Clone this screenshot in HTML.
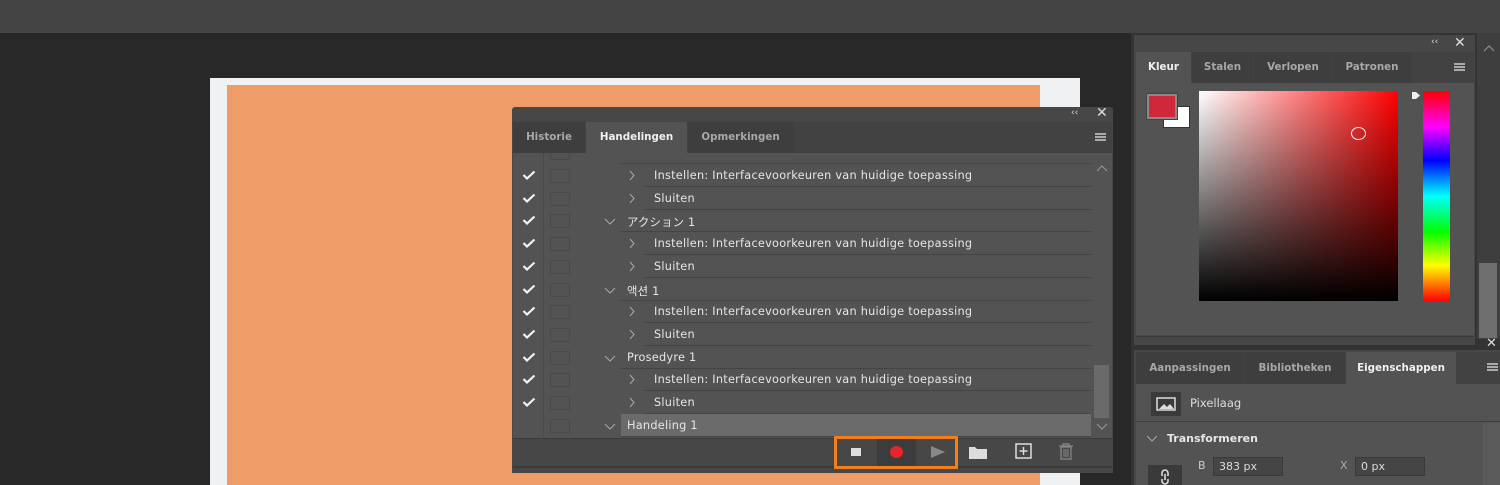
<!DOCTYPE html><html><head><style>
*{margin:0;padding:0;box-sizing:border-box}
body{width:1500px;height:485px;overflow:hidden;background:#282828;font-family:"DejaVu Sans","Noto Sans CJK JP","NanumGothic",sans-serif;position:relative}
.a{position:absolute}
.t{color:#e6e6e6;font-size:11.3px;white-space:nowrap}
.row .t{letter-spacing:0.25px}
.tab{position:absolute;font-size:10.3px;font-weight:bold;color:#a8a8a8;text-align:center}
.row{position:absolute;left:513px;width:578px;height:23px}
.ck{position:absolute;left:9px;top:6px;width:14px;height:10px}
.bx{position:absolute;left:37px;top:5px;width:20px;height:14px;border:1px solid #4a4a4a}
.ln{position:absolute;bottom:0;height:1px;background:#444;right:0}
</style></head><body>
<div class="a" style="left:0;top:0;width:1500px;height:33px;background:#444"></div>
<div class="a" style="left:210px;top:78px;width:870px;height:407px;background:#f0f1f3"></div>
<div class="a" style="left:227px;top:85px;width:813px;height:400px;background:#ef9c68"></div>

<div class="a" style="left:512px;top:107px;width:601px;height:366px;background:#474747;border-radius:3px 3px 0 0"></div>
<div class="a t" style="left:1071px;top:108px;font-size:9px;color:#ddd">‹‹</div>
<div class="a t" style="left:1096px;top:105px;font-size:14px;font-weight:bold;color:#ddd">✕</div>
<div class="a" style="left:513px;top:122px;width:599px;height:31px;background:#424242"></div>
<div class="tab" style="left:513px;top:122px;width:72px;height:31px;line-height:31px;background:#3e3e3e">Historie</div>
<div class="tab" style="left:586px;top:122px;width:101px;height:31px;line-height:31px;background:#535353;color:#f0f0f0">Handelingen</div>
<div class="tab" style="left:688px;top:122px;width:105px;height:31px;line-height:31px;background:#3e3e3e">Opmerkingen</div>
<div class="a" style="left:1095px;top:133px;width:11px;height:8px;border-top:2px solid #aaa;border-bottom:2px solid #aaa"><div style="margin-top:1px;height:2px;background:#aaa"></div></div>
<div class="a" style="left:513px;top:153px;width:599px;height:285px;background:#535353"></div>
<div class="a" style="left:543px;top:153px;width:1px;height:285px;background:#4a4a4a"></div>
<div class="a" style="left:550px;top:153px;width:20px;height:7px;border:1px solid #4a4a4a;border-top:none"></div>
<div class="a" style="left:621px;top:163px;width:470px;height:1px;background:#444"></div>
<div id="rows"></div>
<svg class="a" style="left:1096px;top:165px" width="12" height="7"><path d="M1 6l5-5 5 5" fill="none" stroke="#999"/></svg>
<div class="a" style="left:1094px;top:365px;width:15px;height:53px;background:#6a6a6a"></div>
<svg class="a" style="left:1096px;top:423px" width="12" height="7"><path d="M1 1l5 5 5-5" fill="none" stroke="#999"/></svg>
<div class="a" style="left:513px;top:438px;width:599px;height:1px;background:#3a3a3a"></div>
<div class="a" style="left:513px;top:466px;width:599px;height:2px;background:#3a3a3a"></div>
<div class="a" style="left:834px;top:436px;width:124px;height:33px;border:3px solid #f07f1c"></div>
<div class="a" style="left:877px;top:439px;width:39px;height:27px;background:#3c3c3c"></div>
<div class="a" style="left:851px;top:448px;width:10px;height:8px;background:#ddd"></div>
<div class="a" style="left:890px;top:446px;width:13px;height:12px;border-radius:50%;background:#e8252b"></div>
<svg class="a" style="left:930px;top:446px" width="16" height="12"><path d="M1 0L15 6L1 12Z" fill="#888"/></svg>
<svg class="a" style="left:968px;top:444px" width="20" height="16"><path d="M1 3h6l2 2h10v10H1Z" fill="#ddd"/></svg>
<svg class="a" style="left:1015px;top:443px" width="17" height="16"><rect x="1" y="1" width="15" height="14" fill="none" stroke="#ddd" stroke-width="1.5"/><path d="M8.5 4v8M4.5 8h8" stroke="#ddd" stroke-width="1.5"/></svg>
<svg class="a" style="left:1058px;top:443px" width="16" height="17"><path d="M1 3h14M5 3V1h6v2M3 4h10v12H3Z" fill="none" stroke="#888" stroke-width="1.3"/><path d="M6 6v8M8 6v8M10 6v8" stroke="#888"/></svg>

<div class="a" style="left:1131px;top:33px;width:369px;height:452px;background:#333"></div>
<div class="a" style="left:1477px;top:33px;width:23px;height:306px;background:#3e3e3e"></div>
<svg class="a" style="left:1483px;top:45px" width="12" height="7"><path d="M1 6l5-5 5 5" fill="none" stroke="#999"/></svg>
<div class="a" style="left:1479px;top:263px;width:18px;height:75px;background:#6e6e6e"></div>
<div class="a t" style="left:1486px;top:336px;font-size:13px;font-weight:bold;color:#ddd">✕</div>
<div class="a" style="left:1134px;top:35px;width:341px;height:310px;background:#474747"></div>
<div class="a t" style="left:1431px;top:37px;font-size:9px;color:#ddd">‹‹</div>
<div class="a t" style="left:1454px;top:35px;font-size:14px;font-weight:bold;color:#ddd">✕</div>
<div class="a" style="left:1136px;top:52px;width:338px;height:31px;background:#424242"></div>
<div class="tab" style="left:1136px;top:52px;width:55px;height:31px;line-height:31px;background:#535353;color:#f0f0f0">Kleur</div>
<div class="tab" style="left:1192px;top:52px;width:61px;height:31px;line-height:31px;background:#3e3e3e">Stalen</div>
<div class="tab" style="left:1254px;top:52px;width:78px;height:31px;line-height:31px;background:#3e3e3e">Verlopen</div>
<div class="tab" style="left:1333px;top:52px;width:78px;height:31px;line-height:31px;background:#3e3e3e">Patronen</div>
<div class="a" style="left:1454px;top:63px;width:11px;height:8px;border-top:2px solid #aaa;border-bottom:2px solid #aaa"><div style="margin-top:1px;height:2px;background:#aaa"></div></div>
<div class="a" style="left:1136px;top:83px;width:338px;height:252px;background:#535353"></div>
<div class="a" style="left:1163px;top:106px;width:27px;height:22px;background:#fff;border:1px solid #333"></div>
<div class="a" style="left:1147px;top:94px;width:30px;height:25px;background:#d0283a;border:2px solid #8a8a8a;outline:1px solid #444"></div>
<div class="a" style="left:1199px;top:91px;width:199px;height:210px;background:linear-gradient(to bottom,rgba(0,0,0,0),#000),linear-gradient(to right,#fff,#f00)"></div>
<div class="a" style="left:1351px;top:127px;width:15px;height:13px;border:1px solid #eee;border-radius:50%"></div>
<div class="a" style="left:1423px;top:91px;width:27px;height:210px;background:linear-gradient(to bottom,#f00,#f0f 17%,#00f 33%,#0ff 50%,#0f0 67%,#ff0 83%,#f00)"></div>
<svg class="a" style="left:1411px;top:91px" width="10" height="9"><path d="M1 1h4l4 3.5-4 3.5H1Z" fill="#eee"/></svg>
<div class="a" style="left:1136px;top:336px;width:338px;height:8px;background:#474747;border-top:1px solid #3a3a3a"></div>
<div class="a" style="left:1134px;top:350px;width:366px;height:135px;background:#474747"></div>
<div class="a" style="left:1136px;top:352px;width:364px;height:32px;background:#424242"></div>
<div class="tab" style="left:1136px;top:352px;width:108px;height:32px;line-height:32px;background:#3e3e3e">Aanpassingen</div>
<div class="tab" style="left:1245px;top:352px;width:100px;height:32px;line-height:32px;background:#3e3e3e">Bibliotheken</div>
<div class="tab" style="left:1346px;top:352px;width:110px;height:32px;line-height:32px;background:#535353;color:#f0f0f0">Eigenschappen</div>
<div class="a" style="left:1487px;top:363px;width:11px;height:8px;border-top:2px solid #aaa;border-bottom:2px solid #aaa"><div style="margin-top:1px;height:2px;background:#aaa"></div></div>
<div class="a" style="left:1136px;top:384px;width:364px;height:101px;background:#535353"></div>
<div class="a" style="left:1151px;top:392px;width:30px;height:24px;background:#3a3a3a"></div>
<svg class="a" style="left:1156px;top:397px" width="20" height="14"><rect x="1" y="1" width="18" height="12" fill="none" stroke="#ddd" stroke-width="1.5"/><path d="M3 12l5-5 3 3 3-3 4 5Z" fill="#ddd"/></svg>
<div class="a t" style="left:1190px;top:396px;font-size:11.5px;color:#ddd">Pixellaag</div>
<div class="a" style="left:1136px;top:421px;width:364px;height:1px;background:#3f3f3f"></div>
<div class="a" style="left:1483px;top:423px;width:17px;height:62px;background:#5a5a5a"></div>
<svg class="a" style="left:1146px;top:435px" width="12" height="7"><path d="M1 1l5 5 5-5" fill="none" stroke="#aaa"/></svg>
<div class="a t" style="left:1167px;top:432px;font-weight:bold;font-size:11px;color:#e6e6e6">Transformeren</div>
<div class="a t" style="left:1198px;top:459px;color:#ccc;font-size:11px">B</div>
<div class="a" style="left:1213px;top:457px;width:70px;height:19px;background:#454545;border:1px solid #3a3a3a"></div>
<div class="a t" style="left:1219px;top:460px;font-size:11px;color:#ddd">383 px</div>
<div class="a t" style="left:1340px;top:459px;color:#aaa;font-size:11px">X</div>
<div class="a" style="left:1355px;top:457px;width:70px;height:19px;background:#454545;border:1px solid #3a3a3a"></div>
<div class="a t" style="left:1361px;top:460px;font-size:11px;color:#ddd">0 px</div>
<div class="a" style="left:1148px;top:465px;width:34px;height:20px;background:#3a3a3a"></div>
<svg class="a" style="left:1159px;top:469px" width="12" height="16"><path d="M3 7V4a3 3 0 0 1 6 0v3M3 10v2a3 3 0 0 0 6 0v-2M6 5v6" fill="none" stroke="#ddd" stroke-width="1.6"/></svg>

<script>
var rows=[["s","Instellen:  Interfacevoorkeuren van huidige toepassing",1],["s","Sluiten",1],["g","アクション 1",1],["s","Instellen:  Interfacevoorkeuren van huidige toepassing",1],["s","Sluiten",1],["g","액션 1",1],["s","Instellen:  Interfacevoorkeuren van huidige toepassing",1],["s","Sluiten",1],["g","Prosedyre 1",1],["s","Instellen:  Interfacevoorkeuren van huidige toepassing",1],["s","Sluiten",1],["h","Handeling 1",0]];
var h="";rows.forEach(function(r,i){var top=164+i*22.7;
var step=r[0]=="s";
h+='<div class="row" style="top:'+top+'px">';
if(r[0]=="h")h+='<div style="position:absolute;left:108px;top:0;width:470px;height:22px;background:#6b6b6b"></div>';
if(r[2])h+='<svg class="ck" viewBox="0 0 14 10"><path d="M1.5 5l3.5 3.5L12.5 1.5" fill="none" stroke="#f2f2f2" stroke-width="2.2"/></svg>';
h+='<div class="bx"></div>';
if(step){h+='<svg style="position:absolute;left:116px;top:6px" width="6" height="11"><path d="M1 1l4 4.5L1 10" fill="none" stroke="#aaa"/></svg><div class="t" style="position:absolute;left:141px;top:5px">'+r[1]+'</div>';}
else{h+='<svg style="position:absolute;left:91px;top:9px" width="12" height="7"><path d="M1 1l5 5 5-5" fill="none" stroke="#aaa"/></svg><div class="t" style="position:absolute;left:114px;top:5px">'+r[1]+'</div>';}
h+='<div class="ln" style="left:'+(step?132:108)+'px"></div></div>';});
document.getElementById("rows").innerHTML=h;
</script>
</body></html>
